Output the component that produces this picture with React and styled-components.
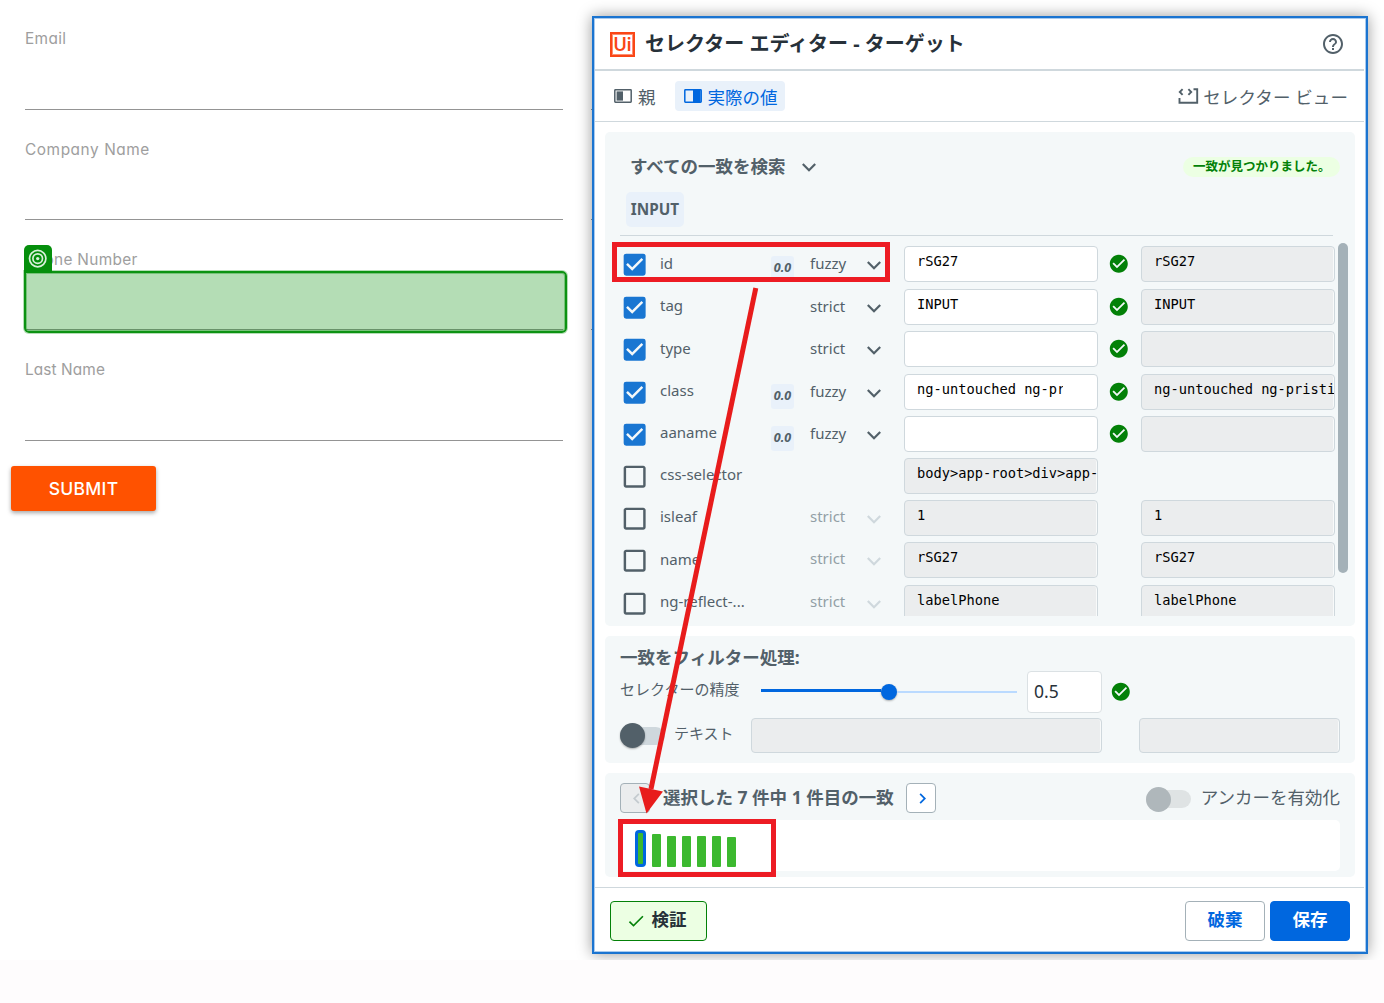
import React from 'react';
import styled, { createGlobalStyle, css } from 'styled-components';
import {
  MdCheck,
  MdCheckBox,
  MdCheckBoxOutlineBlank,
  MdCheckCircle,
  MdChevronLeft,
  MdChevronRight,
  MdHelpOutline,
} from 'react-icons/md';

const GlobalStyle = createGlobalStyle`
  * {
    box-sizing: border-box;
  }

  body {
    margin: 0;
    background: #fefcfd;
    font-family: "Noto Sans", "Noto Sans CJK JP", sans-serif;
    color: #526069;
  }

  svg {
    display: block;
    flex: none;
  }
`

const Desktop = styled.div`
  position: relative;
  width: 1384px;
  height: 960px;
  overflow: hidden;
  background: #fff;
`

/* ---------- web form ---------- */

const Form = styled.div`
  display: grid;
  grid-template-columns: 538px 538px;
  grid-template-rows: 110px 110px 110px 111px;
  column-gap: 28px;
  padding-left: 25px;
`

const FormField = styled.div`
  grid-column: ${p => p.$col};
  padding-top: ${p => p.$top || 29}px;
  border-bottom: 1px solid #949494;
  font: 15.4px/22px Inter, sans-serif;
  font-feature-settings: "cv11", "ss03";
  letter-spacing: ${p => p.$spacing || 0}px;
  color: #9e9e9e;
`

const Submit = styled.button`
  display: block;
  width: 145px;
  height: 45px;
  margin: 25px 0 0 11px;
  padding: 0;
  border: 0;
  border-radius: 3px;
  background: #ff5200;
  box-shadow: 0 2px 4px rgba(0, 0, 0, 0.35);
  color: #fff;
  font: 500 17.5px Inter, sans-serif;
  letter-spacing: 0.3px;
`

const Highlight = styled.div`
  position: absolute;
  left: 24px;
  top: 271px;
  width: 543px;
  height: 62px;
  border: 2px solid #0c9212;
  border-radius: 0 5px 5px 5px;
  background: rgba(5, 144, 10, 0.3);
  box-shadow: inset 0 0 0 1px rgba(5, 144, 10, 0.35), 0 0 0 1px rgba(5, 144, 10, 0.3);
`

const HighlightTag = styled.div`
  position: absolute;
  left: 24px;
  top: 245px;
  display: flex;
  justify-content: center;
  align-items: center;
  width: 28px;
  height: 28px;
  border-radius: 5px 5px 0 0;
  background: #058f0c;
`

/* ---------- selector editor window ---------- */

const Window = styled.div`
  position: absolute;
  left: 592px;
  top: 16px;
  display: flex;
  flex-direction: column;
  width: 776px;
  height: 938px;
  padding: 1px 2px 1px 1px;
  border: 2px solid #1b74d0;
  background: #fff;
  box-shadow: inset 0 0 0 1px #a9caee, 0 0 14px rgba(0, 0, 0, 0.4);
`

const TitleBar = styled.header`
  display: flex;
  align-items: center;
  height: 52px;
  padding: 0 19px 0 15px;
  border-bottom: 2px solid #cfd8dd;
`

const Logo = styled.span`
  display: flex;
  justify-content: center;
  width: 25px;
  height: 25px;
  border: 2px solid #fa4616;
  box-shadow: inset 0 0 0 1px #fc8f72;
  color: #fa4616;
  font: 600 18px/21px Inter, sans-serif;
`

const Title = styled.h1`
  flex: 1;
  margin: 0 0 0 10px;
  font-size: 20px;
  font-weight: 700;
  line-height: 28px;
  color: #273139;
`

const Tabs = styled.nav`
  display: flex;
  align-items: center;
  height: 51px;
  padding: 0 16px 0 10px;
  border-bottom: 1px solid #cfd8dd;
`

const Tab = styled.div`
  display: flex;
  align-items: center;
  gap: 6px;
  height: 30px;
  padding: 2px 9px 0;
  margin-right: 10px;
  border-radius: 4px;
  font-size: 17.5px;
  line-height: 28px;
  white-space: nowrap;
  ${p => p.$active && css`
    padding: 2px 7px 0 9px;
    background: #e9f1fa;
    color: #0067df;
  `}
  ${p => p.$end && css`
    margin: 0 0 0 auto;
    padding: 2px 0 0;
    gap: 4px;
    letter-spacing: 0.1px;
  `}

  svg {
    margin-bottom: 2px;
  }
`

const Body = styled.main`
  display: flex;
  flex-direction: column;
  gap: 10px;
  height: 766px;
  padding: 10px 9px 0 10px;
  border-bottom: 1px solid #cfd8dd;
`

const Panel = styled.section`
  height: ${p => p.$height}px;
  border-radius: 5px;
  background: #f4f8f9;
`

const PanelHead = styled.div`
  display: flex;
  justify-content: space-between;
  align-items: center;
  height: 60px;
  padding: 10px 15px 0 25px;
`

const Heading = styled.h2`
  display: flex;
  align-items: center;
  gap: 16px;
  margin: 0;
  padding-bottom: 2px;
  font-size: 17.5px;
  font-weight: 700;
  line-height: 26px;
  white-space: nowrap;

  svg {
    margin-top: 2px;
  }
`

const Found = styled.span`
  height: 20px;
  width: 157px;
  padding-left: 10px;
  border-radius: 10px;
  background: #ecffe3;
  color: #038108;
  font-size: 12.5px;
  font-weight: 700;
  line-height: 20px;
  white-space: nowrap;
`

const NodeChip = styled.div`
  width: 58px;
  height: 35px;
  margin-left: 21px;
  border-radius: 5px;
  background: #e9f1fa;
  font-size: 15.3px;
  font-weight: 700;
  line-height: 34px;
  text-align: center;
`

const Rule = styled.div`
  height: 1px;
  margin: 8px 22px 0 15px;
  background: #cfd8dd;
`

const ListArea = styled.div`
  display: flex;
  height: 380px;
  overflow: hidden;
`

const List = styled.div`
  width: 730px;
  padding: 10px 0 0 15px;
`

const Scrollbar = styled.div`
  width: 10px;
  height: 330px;
  margin: 7px 0 0 3px;
  border-radius: 5px;
  background: #a4b1b8;
`

const Row = styled.div`
  display: grid;
  grid-template-columns: 40px 111px 39px 50px 44px 194px 43px 194px;
  height: ${p => p.$height}px;
`

const CheckCell = styled.div`
  padding-top: 4.33px;
  margin-left: -0.4px;
  color: ${p => (p.$on ? '#1976d2' : '#526069')};
`

const AttrName = styled.div`
  font-size: 15px;
  line-height: ${p => (p.$height === 43 ? 34 : 32)}px;
  white-space: nowrap;
`

const Accuracy = styled.div`
  width: 23px;
  height: 25px;
  margin-top: 10px;
  border-radius: 3px;
  background: #e9f1fa;
  font-size: 12.5px;
  font-style: italic;
  font-weight: 700;
  line-height: 23px;
  text-align: center;
`

const Mode = styled.div`
  font-size: 15px;
  line-height: ${p => (p.$off ? 33 : 34)}px;
  color: ${p => (p.$off ? '#929fa6' : '#526069')};
`

const ArrowCell = styled.div`
  padding: 14.5px 0 0 7px;
  color: ${p => (p.$off ? '#cfd8dd' : '#526069')};
`

const TextBox = styled.div`
  width: ${p => (p.$width ? `${p.$width}px` : 'auto')};
  height: ${p => p.$height || 36}px;
  padding-left: 12px;
  border: 1px solid #cfd8dd;
  border-radius: 4px;
  background: ${p => (p.$readOnly ? '#ebedee' : '#fff')};
  box-shadow: ${p => (p.$readOnly ? 'inset -1px 0 0 #f8fafa' : 'none')};
  color: #000;
  font: 13.7px/28px "DejaVu Sans Mono", monospace;
  white-space: nowrap;
  overflow: hidden;
`

const Clip = styled.div`
  width: ${p => (p.$cut ? '146px' : 'auto')};
  overflow: hidden;
`

const StatusCell = styled.div`
  display: flex;
  justify-content: center;
  padding: 7px 0.6px 0 0;
  color: #038108;
`

const FilterTitle = styled(Heading)`
  height: 35px;
  padding: 7px 0 0 15px;
`

const FilterRow = styled.div`
  display: flex;
  align-items: center;
  height: ${p => p.$height}px;
  padding-left: 15px;
`

const FilterLabel = styled.span`
  width: ${p => p.$width}px;
  padding: 0 0 6px ${p => p.$indent || 0}px;
  font-size: 15px;
  line-height: 22px;
  white-space: nowrap;
`

const Slider = styled.div`
  display: flex;
  align-items: center;
  width: 256px;
  margin-right: 10px;
`

const SliderFill = styled.div`
  width: 120px;
  height: 3px;
  margin-bottom: 3px;
  background: #0067df;
`

const SliderThumb = styled.div`
  width: 16px;
  height: 16px;
  margin-left: -0.5px;
  border-radius: 50%;
  background: #0067df;
  box-shadow: 0 1px 2px rgba(0, 0, 0, 0.3);
`

const SliderRest = styled.div`
  flex: 1;
  height: 2px;
  background: #badaff;
`

const NumberBox = styled.div`
  width: 75px;
  height: 42px;
  margin-right: 8.4px;
  padding-left: 6px;
  border: 1px solid #dbe1e4;
  border-radius: 4px;
  background: #fff;
  color: #273139;
  font-size: 17.5px;
  line-height: 39px;
`

const Valid = styled(MdCheckCircle)`
  color: #038108;
`

const Gap = styled.div`
  width: 37px;
`

const Switch = styled.div`
  display: flex;
  align-items: center;
  width: 45px;
  height: 18px;
  border-radius: 9px;
  background: ${p => (p.$off ? '#dfe3e4' : '#cfd8dd')};

  &::before {
    content: "";
    width: 25px;
    height: 25px;
    border-radius: 50%;
    background: ${p => (p.$off ? '#afb7bb' : '#526069')};
    box-shadow: 0 1px 2px rgba(0, 0, 0, ${p => (p.$off ? 0 : 0.3)});
    flex: none;
  }
`

const MatchBar = styled.div`
  display: flex;
  align-items: center;
  height: 47px;
  padding: 3px 15px 0;
`

const StepButton = styled.button`
  display: flex;
  justify-content: center;
  align-items: center;
  width: 30px;
  height: 30px;
  padding: 0 0 0 2px;
  border: 1px solid #a4b1b8;
  border-radius: 4px;
  background: ${p => (p.disabled ? '#ebedee' : '#fff')};
  color: ${p => (p.disabled ? '#c4cbcf' : '#0067df')};
`

const MatchText = styled.div`
  width: 256px;
  padding: 0 0 2px 13px;
  font-size: 17.5px;
  font-weight: 700;
  line-height: 26px;
  white-space: nowrap;
`

const Anchor = styled.div`
  display: flex;
  align-items: center;
  gap: 10px;
  margin-left: auto;
  padding-top: 2px;
  font-size: 17.5px;
  line-height: 24px;
  white-space: nowrap;

  span {
    padding-bottom: 4px;
  }
`

const Chart = styled.div`
  display: flex;
  align-items: flex-end;
  gap: 6px;
  height: 51px;
  margin: 0 15px;
  padding: 0 15px 4px;
  border-radius: 5px;
  background: #fff;
`

const Bar = styled.div`
  width: ${p => (p.$selected ? 11 : 9)}px;
  border: ${p => (p.$selected ? '3px solid #0067df' : '0')};
  border-radius: ${p => (p.$selected ? 4 : 1)}px;
  background: #3cb92f;
`

const Footer = styled.footer`
  display: flex;
  align-items: center;
  gap: 5px;
  height: 63px;
  padding: 3px 14px 0 15px;
`

const Button = styled.button`
  display: flex;
  justify-content: center;
  align-items: center;
  width: 80px;
  height: 40px;
  padding: 0 0 5px;
  border: 1px solid #a4b1b8;
  border-radius: 4px;
  background: #fff;
  color: #0067df;
  font-family: inherit;
  font-size: 17.5px;
  font-weight: 700;
  ${p => p.$primary && css`
    border-color: #0067df;
    background: #0067df;
    color: #fff;
  `}
  ${p => p.$verify && css`
    gap: 6px;
    width: 97px;
    margin-right: auto;
    padding-right: 5px;
    border-color: #038108;
    background: #ecffe3;
    color: #273139;

    svg {
      margin-top: 5px;
      color: #038108;
    }
  `}
`

/* ---------- callouts ---------- */

const Callout = styled.div`
  position: absolute;
  left: ${p => p.$x}px;
  top: ${p => p.$y}px;
  width: ${p => p.$w}px;
  height: ${p => p.$h}px;
  border: 5px solid #ed1c24;
`

const CalloutArrow = styled.svg`
  position: absolute;
  left: 630px;
  top: 280px;
`

const Chevron = () => (
  <svg width="14" height="9" viewBox="0 0 14 9" fill="none" stroke="currentColor" strokeWidth="2.2">
    <path d="M0.8 1 7 7.200 13.200 1" />
  </svg>
)

const PaneIcon = ({ right }) => (
  <svg width="18" height="14" viewBox="0 0 18 14">
    <rect x="0.8" y="0.8" width="16.4" height="12.4" rx="0.6" fill="none" stroke="currentColor" strokeWidth="1.5" />
    <rect x={right ? 9 : 2.6} y={right ? 1 : 2.4} width={right ? 7.6 : 6.4} height={right ? 12 : 9.2} fill="currentColor" />
  </svg>
)

const SelectorIcon = () => (
  <svg width="21" height="16" viewBox="0 0 21 16" fill="none" stroke="currentColor" strokeWidth="1.9">
    <path d="M4.6 1.2 1.8 4l2.8 2.8M10.400 1.200l2.8 2.8-2.8 2.8M15.500 1.200h3.700v13.600H1.500V10" />
  </svg>
)

const TargetIcon = () => (
  <svg width="20" height="20" viewBox="0 0 20 20" fill="none" stroke="#d9f0da" strokeWidth="1.7">
    <circle cx="9.7" cy="9.600" r="8.2" />
    <circle cx="9.7" cy="9.600" r="4.8" />
    <circle cx="9.7" cy="9.600" r="1.7" fill="#d9f0da" stroke="none" />
  </svg>
)

const fields = [
  { label: 'Email', row: 1, spacing: 0.35, top: 28 },
  { label: 'Company Name', row: 2, spacing: 0.56 },
  { label: 'Phone Number', row: 3, spacing: 0.3 },
  { label: 'Last Name', row: 4, spacing: 0.1 },
];

const attributes = [
  { name: 'id', on: true, mode: 'fuzzy', value: 'rSG27', h: 43 },
  { name: 'tag', on: true, mode: 'strict', value: 'INPUT', h: 42 },
  { name: 'type', on: true, mode: 'strict', value: '', h: 43 },
  { name: 'class', on: true, mode: 'fuzzy', value: 'ng-untouched ng-pristine', cut: true, h: 42 },
  { name: 'aaname', on: true, mode: 'fuzzy', value: '', h: 42 },
  { name: 'css-selector', value: 'body>app-root>div>app-', single: true, h: 42 },
  { name: 'isleaf', mode: 'strict', value: '1', h: 42 },
  { name: 'name', mode: 'strict', value: 'rSG27', h: 43 },
  { name: 'ng-reflect-...', mode: 'strict', value: 'labelPhone', h: 42 },
];

const barHeights = [37, 33, 31, 31, 31, 31, 30];

const AttributeRow = ({ attr }) => {
  const { name, on, mode, value, cut, single, h } = attr;
  return (
    <Row $height={h}>
      <CheckCell $on={on}>
        {on ? <MdCheckBox size={29.3} /> : <MdCheckBoxOutlineBlank size={29.3} />}
      </CheckCell>
      <AttrName $height={h}>{name}</AttrName>
      <div>{mode === 'fuzzy' && <Accuracy>0.0</Accuracy>}</div>
      <Mode $off={!on}>{mode}</Mode>
      <ArrowCell $off={!on}>{mode && <Chevron />}</ArrowCell>
      <TextBox $readOnly={!on}><Clip $cut={cut}>{value}</Clip></TextBox>
      <StatusCell>{on && <MdCheckCircle size={21.6} />}</StatusCell>
      {!single && <TextBox $readOnly>{value}</TextBox>}
    </Row>
  )
}

const SelectorEditor = () => (
  <Window>
    <TitleBar>
      <Logo>Ui</Logo>
      <Title>セレクター エディター - ターゲット</Title>
      <MdHelpOutline size={24} />
    </TitleBar>

    <Tabs>
      <Tab><PaneIcon />親</Tab>
      <Tab $active><PaneIcon right />実際の値</Tab>
      <Tab $end><SelectorIcon />セレクター ビュー</Tab>
    </Tabs>

    <Body>
      <Panel $height={494}>
        <PanelHead>
          <Heading>すべての一致を検索<Chevron /></Heading>
          <Found>一致が見つかりました。</Found>
        </PanelHead>
        <NodeChip>INPUT</NodeChip>
        <Rule />
        <ListArea>
          <List>
            {attributes.map(attr => <AttributeRow key={attr.name} attr={attr} />)}
          </List>
          <Scrollbar />
        </ListArea>
      </Panel>

      <Panel $height={127}>
        <FilterTitle>一致をフィルター処理:</FilterTitle>
        <FilterRow $height={42}>
          <FilterLabel $width={141}>セレクターの精度</FilterLabel>
          <Slider>
            <SliderFill />
            <SliderThumb />
            <SliderRest />
          </Slider>
          <NumberBox>0.5</NumberBox>
          <Valid size={21.6} />
        </FilterRow>
        <FilterRow $height={45}>
          <Switch />
          <FilterLabel $width={86} $indent={9}>テキスト</FilterLabel>
          <TextBox $readOnly $width={351} $height={35} />
          <Gap />
          <TextBox $readOnly $width={201} $height={35} />
        </FilterRow>
      </Panel>

      <Panel $height={104}>
        <MatchBar>
          <StepButton disabled><MdChevronLeft size={21} /></StepButton>
          <MatchText>選択した 7 件中 1 件目の一致</MatchText>
          <StepButton><MdChevronRight size={21} /></StepButton>
          <Anchor><Switch $off /><span>アンカーを有効化</span></Anchor>
        </MatchBar>
        <Chart>
          {barHeights.map((height, i) => (
            <Bar key={i} $selected={i === 0} style={{ height }} />
          ))}
        </Chart>
      </Panel>
    </Body>

    <Footer>
      <Button $verify><MdCheck size={20} />検証</Button>
      <Button>破棄</Button>
      <Button $primary>保存</Button>
    </Footer>
  </Window>
)

const App = () => (
  <>
    <GlobalStyle />
    <Desktop>
      <Form>
        {fields.map(({ label, row, spacing, top }) => (
          <React.Fragment key={label}>
            <FormField $col={1} $spacing={spacing} $top={top}>{label}</FormField>
            {row < 4 && <FormField $col={2} />}
          </React.Fragment>
        ))}
      </Form>
      <Submit>SUBMIT</Submit>
      <Highlight />
      <HighlightTag><TargetIcon /></HighlightTag>

      <SelectorEditor />

      <Callout $x={612} $y={242} $w={278} $h={40} />
      <Callout $x={618} $y={819} $w={158} $h={58} />
      <CalloutArrow width="140" height="540" viewBox="630 280 140 540">
        <path d="M755.8 288 651 789" stroke="#e81c1c" strokeWidth="5" />
        <path d="M639 786.5 663 791.5 646.500 813.500z" fill="#e81c1c" />
      </CalloutArrow>
    </Desktop>
  </>
)

export default App;
